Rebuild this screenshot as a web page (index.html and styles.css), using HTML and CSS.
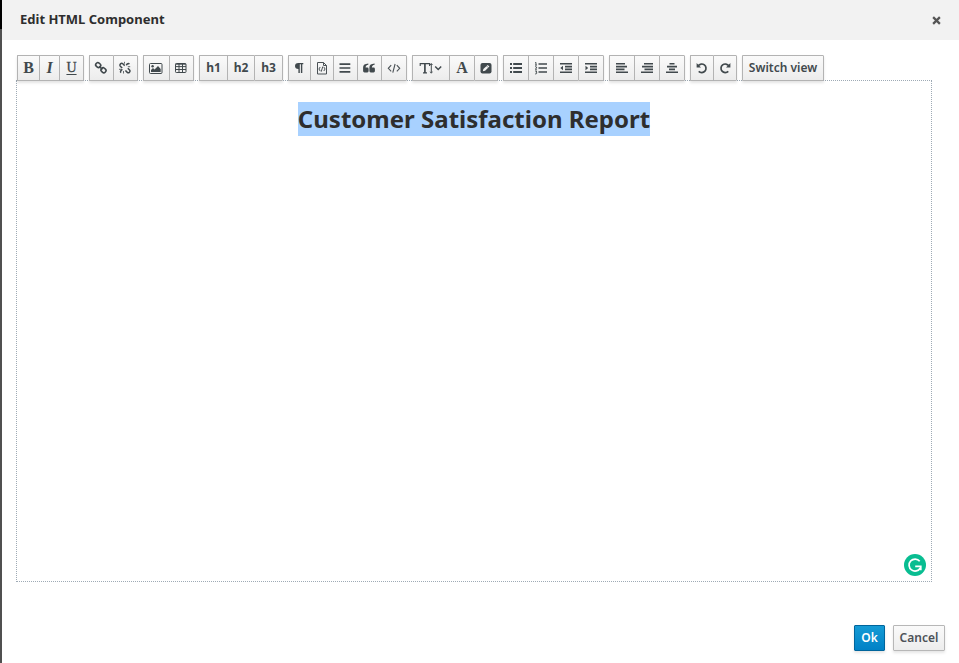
FILE: index.html
```html
<!DOCTYPE html>
<html lang="en">
<head>
<meta charset="utf-8">
<title>Edit HTML Component</title>
<link rel="stylesheet" href="styles.css">
</head>
<body>
<div class="backdrop"></div>
<main class="dialog">
  <header class="dialog-header">
    <h1>Edit HTML Component</h1>
    <button class="close" aria-label="Close"><svg width="9" height="9" viewBox="0 0 8 8"><path d="M1 1l6 6M7 1L1 7" stroke="#555" stroke-width="2"/></svg></button>
  </header>
  <section class="content">
    <div class="toolbar">
      <div class="group">
        <button class="w22 serif">B</button><button class="w20 serif italic">I</button><button class="w25 serif underlined">U</button>
      </div>
      <div class="group">
        <button class="w24"><svg viewBox="0 0 14 14"><g fill="none" stroke="#41494d" stroke-width="1.6"><rect x="1.7" y="2" width="5" height="4.2" rx="1.8" transform="rotate(42 4.2 4.1)"/><rect x="7" y="7.2" width="5" height="4.2" rx="1.8" transform="rotate(42 9.5 9.3)"/><path d="M5.2 5.2l3.2 3.2"/></g></svg></button>
        <button class="w25"><svg viewBox="0 0 14 14"><g fill="none" stroke="#41494d"><path d="M6.7 4.6L4.8 2.8Q3.7 1.8 2.5 2.9Q1.3 4.1 2.3 5.2L4.2 7M7.4 9.5l1.9 1.9q1.1.9 2.2-.2q1.1-1.1.1-2.2L9.8 7.2M8.2 4.1l1.2-1.2q1-.8 2 .2M4.3 8.3l-1.6 1.6q-.6 1 .4 1.8" stroke-width="1.5"/><path d="M6.5.8v1.9M9.8 5.7h2.4M1 8.3h2.2M5.5 10v2.5" stroke-width=".8"/></g></svg></button>
      </div>
      <div class="group">
        <button class="w26"><svg viewBox="0 0 14 14"><rect x=".5" y="2.5" width="12.5" height="10" rx="1" fill="none" stroke="#41494d"/><circle cx="3.6" cy="5.2" r="1.2" fill="#41494d"/><path d="M2 11V9l2-2 1.5 1.5L9 5l2.7 3v3z" fill="#41494d"/></svg></button>
        <button class="w25"><svg viewBox="0 0 14 14"><rect x="1.5" y="2.5" width="10.5" height="9" rx=".8" fill="none" stroke="#41494d"/><path d="M1.5 3.2H12M1.5 5.6H12M1.5 8.5H12M5 3v8.5M8.5 3v8.5" stroke="#41494d"/></svg></button>
      </div>
      <div class="group">
        <button class="w28">h1</button><button class="w27">h2</button><button class="w29">h3</button>
      </div>
      <div class="group">
        <button class="w22"><svg viewBox="0 0 14 14"><path d="M11.3 2v1.2h-1V12H8.9V3.2H7.8V12H6.4V8Q3 7.8 3 5T6.4 2z" fill="#41494d"/></svg></button>
        <button class="w23"><svg viewBox="0 0 14 14"><path d="M2.5 1.5h6l3 3v8.5h-9zM8.5 1.5v3h3M5.2 6L3.9 8l1.3 2M8.8 6l1.3 2-1.3 2M7.8 5.5l-1.6 5.2" fill="none" stroke="#4b5256"/></svg></button>
        <button class="w24"><svg viewBox="0 0 14 14"><path d="M1.5 3.1H12.3M1.5 7H12.3M1.5 10.9H12.3" stroke="#41494d" stroke-width="1.7"/></svg></button>
        <button class="w24"><svg viewBox="0 0 14 14"><path d="M6.3 2.6v1.2Q3.5 4.3 3.6 6.6h1.7q1.3 0 1.3 1.3v2.2q0 1.3-1.3 1.3H2.5q-1.4 0-1.4-1.4V6.2q0-3.2 5.2-3.6zM12.6 2.6v1.2Q9.8 4.3 9.9 6.6h1.7q1.3 0 1.3 1.3v2.2q0 1.3-1.3 1.3H8.8q-1.4 0-1.4-1.4V6.2q0-3.2 5.2-3.6z" fill="#41494d"/></svg></button>
        <button class="w26"><svg viewBox="0 0 14 14"><path d="M4.2 4.2L1.3 7.3l2.9 3.1M9.8 4.2l2.9 3.1-2.9 3.1M8.1 3L5.8 11.7" fill="none" stroke="#4b5256" stroke-width="1.1"/></svg></button>
      </div>
      <div class="group">
        <button class="w37"><svg class="wide" viewBox="0 0 24 14"><path d="M1.2 5V2.6h9.4V5M4 11.9h4" fill="none" stroke="#41494d" stroke-width="1.1"/><path d="M5.9 2.5v9.4" stroke="#41494d" stroke-width="1.7"/><path d="M12.3 3v8.5M11.2 4l1.1-1.5L13.4 4M11.2 10.7l1.1 1.5 1.1-1.5" fill="none" stroke="#41494d"/><path d="M16.2 5.5l3 3 3-3" fill="none" stroke="#41494d" stroke-width="1.5"/></svg></button>
        <button class="w25 serif letter">A</button>
        <button class="w24"><svg viewBox="0 0 14 14"><rect x="1.5" y="2" width="11" height="10.5" rx="2" fill="#41494d"/><path d="M3.8 10.2l.6-2.2 4.3-4.1 1.7 1.7-4.3 4.1z" fill="#f3f3f3"/><path d="M7.5 4.9l1.8 1.8" stroke="#41494d" stroke-width=".6"/></svg></button>
      </div>
      <div class="group">
        <button class="w25"><svg viewBox="0 0 14 14"><path d="M1 3h2M1 7h2M1 11h2M4.2 3H13M4.2 7H13M4.2 11H13" stroke="#41494d" stroke-width="1.8"/></svg></button>
        <button class="w25"><svg viewBox="0 0 14 14"><path d="M4.5 3H13M4.5 7H13M4.5 11H13" stroke="#41494d" stroke-width="1.7"/><path d="M1 2l1-.6V4M1 4.1h2M1 6q1-1 1.6 0T1.2 8.2H3M1 10h1.8L2 11.2q1.4.2.6 1.4-.8.7-1.6.1" fill="none" stroke="#41494d" stroke-width=".9"/></svg></button>
        <button class="w25"><svg viewBox="0 0 14 14"><path d="M1 2.7h12M6 5.6h7M6 8.4h7M1 11.3h12" stroke="#41494d" stroke-width="1.6"/><path d="M4 4.7v4.6L1.3 7z" fill="#41494d"/></svg></button>
        <button class="w26"><svg viewBox="0 0 14 14"><path d="M1 2.7h12M6 5.6h7M6 8.4h7M1 11.3h12" stroke="#41494d" stroke-width="1.6"/><path d="M1.5 4.7v4.6L4.2 7z" fill="#41494d"/></svg></button>
      </div>
      <div class="group">
        <button class="w25"><svg viewBox="0 0 14 14"><path d="M1 2.8h9M1 5.6h11M1 8.4h8.5M1 11.2h12" stroke="#41494d" stroke-width="1.6"/></svg></button>
        <button class="w25"><svg viewBox="0 0 14 14"><path d="M4 2.8h9M2 5.6h11M4.5 8.4H13M1 11.2h12" stroke="#41494d" stroke-width="1.6"/></svg></button>
        <button class="w26"><svg viewBox="0 0 14 14"><path d="M4.5 2.8h5M2 5.6h10M4 8.4h6M1 11.2h12" stroke="#41494d" stroke-width="1.6"/></svg></button>
      </div>
      <div class="group">
        <button class="w23"><svg viewBox="0 0 14 14"><path d="M3.2 4.8A4.3 4.3 0 1 1 3.7 10.4" fill="none" stroke="#41494d" stroke-width="1.7"/><path d="M1.6 2v4.4H6z" fill="#41494d"/></svg></button>
        <button class="w24"><svg viewBox="0 0 14 14"><path d="M10.8 4.8A4.3 4.3 0 1 0 10.3 10.4" fill="none" stroke="#41494d" stroke-width="1.7"/><path d="M12.4 2v4.4H8z" fill="#41494d"/></svg></button>
      </div>
      <div class="group"><button class="w82 switch">Switch view</button></div>
    </div>
    <div class="editor" contenteditable="true" spellcheck="false">
      <h2><span class="selected">Customer Satisfaction Report</span></h2>
      <svg class="checker" viewBox="0 0 22 22"><circle cx="11" cy="11" r="11" fill="#08bd91"/><path d="M15.7 7.2A6 6 0 1 0 16.3 14M11.2 12.4h5.6v3.8" fill="none" stroke="#fff" stroke-width="1.7"/></svg>
    </div>
  </section>
  <footer>
    <button class="action primary">Ok</button>
    <button class="action secondary">Cancel</button>
  </footer>
</main>
</body>
</html>
```
FILE: styles.css
```css
* { box-sizing: border-box; }
body {
  margin: 0;
  width: 959px;
  height: 663px;
  display: flex;
  overflow: hidden;
  background: #fff;
  color: #2e2e2e;
  font-family: "Noto Sans", "Open Sans", sans-serif;
}
button { margin: 0; padding: 0; font: inherit; color: inherit; }
.backdrop {
  width: 2px;
  background: linear-gradient(#000 29px, #505050 29px);
}
.dialog { flex: 1; display: flex; flex-direction: column; }
.dialog-header {
  height: 40px;
  padding: 0 18px 2px 18px;
  display: flex;
  align-items: center;
  justify-content: space-between;
  background: #f2f2f2;
}
.dialog-header h1 { margin: 0; font-size: 13px; line-height: 18px; font-weight: 700; }
.close { border: 0; background: none; display: flex; padding-top: 2px; }
.content { padding: 15px 27px 0 14px; }
.toolbar {
  position: relative;
  z-index: 1;
  display: flex;
  gap: 5px;
  height: 26px;
  margin: 0 0 -1px 1px;
}
.group {
  display: flex;
  border-radius: 1px;
  box-shadow: 0 2px 3px rgba(0, 0, 0, .11);
}
.group button {
  height: 26px;
  padding-bottom: 2px;
  display: flex;
  align-items: center;
  justify-content: center;
  border: 1px solid #b3b3b3;
  border-right-width: 0;
  background: linear-gradient(#fafafa, #ececec);
  color: #41494d;
  font-size: 12px;
  font-weight: 700;
}
.group button:first-child { border-radius: 1px 0 0 1px; }
.group button:last-child { border-right-width: 1px; border-radius: 0 1px 1px 0; }
.group svg { width: 14px; height: 14px; position: relative; top: .5px; left: -.2px; }
.group svg.wide { width: 24px; }
.group .serif { font-family: "Liberation Serif", serif; font-size: 16px; padding-bottom: 1px; }
.group .italic { font-style: italic; }
.group .underlined {
  font-weight: 400;
  font-size: 14px;
  -webkit-text-stroke: .3px #41494d;
  text-decoration: underline;
  text-underline-offset: 2px;
}
.group .switch { font-weight: 600; }
.w20 { width: 20px; }
.w22 { width: 22px; }
.w23 { width: 23px; }
.w24 { width: 24px; }
.w25 { width: 25px; }
.w26 { width: 26px; }
.w27 { width: 27px; }
.w28 { width: 28px; }
.w29 { width: 29px; }
.w37 { width: 37px; }
.w82 { width: 82px; }
.editor {
  position: relative;
  height: 502px;
  padding-top: 21px;
  border: 1px dotted #9eaab5;
  outline: 0;
  text-align: center;
}
.editor h2 { margin: 0; font-size: 24px; line-height: 34px; font-weight: 700; }
.selected { display: inline-block; background: #a8d1ff; }
.checker { position: absolute; right: 5px; bottom: 5px; width: 22px; height: 22px; }
footer {
  margin-top: auto;
  padding: 0 14px 12px;
  display: flex;
  justify-content: flex-end;
  gap: 8px;
}
.action {
  height: 26px;
  padding-bottom: 2px;
  border: 1px solid #b7b7b7;
  border-radius: 1px;
  font-size: 12px;
  font-weight: 600;
  box-shadow: 0 2px 3px rgba(0, 0, 0, .1);
}
.primary { width: 31px; border-color: #00659c; background: linear-gradient(#159bd5, #0081c6); color: #fff; }
.secondary { width: 52px; background: linear-gradient(#fafafa, #ededed); color: #4d5258; }
```
